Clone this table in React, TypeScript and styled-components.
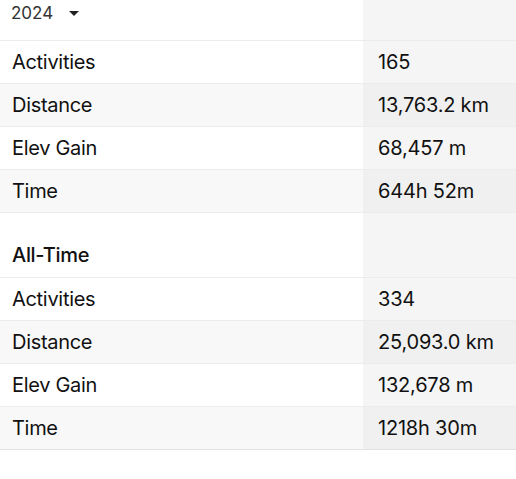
import React from 'react';
import styled, { createGlobalStyle } from 'styled-components';

const GlobalStyle = createGlobalStyle`
  body {
    margin: 0;
    background: #ffffff;
    font-family: Inter, "Liberation Sans", sans-serif;
    color: #111;
  }
`;

const StatsTable = styled.table`
  width: 100%;
  border-collapse: collapse;
  box-shadow: 0 2px 2px rgba(0, 0, 0, 0.06);
  border-bottom: 1px solid #e2e2e2;
`;

const Row = styled.tr<{ $striped?: boolean; $height?: number }>`
  height: ${(p) => p.$height ?? 43}px;
  background: ${(p) => (p.$striped ? '#f8f8f8' : '#ffffff')};
  border-bottom: 1px solid #ececec;
  &:last-child {
    border-bottom: none;
  }
`;

const LabelCell = styled.td`
  width: 363px;
  padding: 0 12px;
  box-sizing: border-box;
  font-size: 20px;
  letter-spacing: -0.3px;
`;

const ValueCell = styled.td<{ $striped?: boolean }>`
  padding: 0 15px;
  font-size: 20px;
  letter-spacing: -0.2px;
  background: ${(p) => (p.$striped ? '#f0f0f0' : '#f5f5f5')};
`;

const YearCell = styled(LabelCell)`
  vertical-align: top;
  padding: 3px 11px 0;
`;

const YearPicker = styled.div`
  display: flex;
  align-items: center;
  gap: 16px;
  font-size: 17px;
  letter-spacing: 0;
  color: #333;
`;

const Caret = styled.span`
  width: 0;
  height: 0;
  border-left: 5px solid transparent;
  border-right: 5px solid transparent;
  border-top: 5px solid #222;
`;

const SectionCell = styled(LabelCell)`
  vertical-align: bottom;
  padding-bottom: 10px;
  font-weight: 500;
`;

type Stat = { label: string; value: string };

const yearStats: Stat[] = [
  { label: 'Activities', value: '165' },
  { label: 'Distance', value: '13,763.2 km' },
  { label: 'Elev Gain', value: '68,457 m' },
  { label: 'Time', value: '644h 52m' },
];

const allTimeStats: Stat[] = [
  { label: 'Activities', value: '334' },
  { label: 'Distance', value: '25,093.0 km' },
  { label: 'Elev Gain', value: '132,678 m' },
  { label: 'Time', value: '1218h 30m' },
];

const StatRows = ({ stats }: { stats: Stat[] }) => (
  <>
    {stats.map((s, i) => (
      <Row key={s.label} $striped={i % 2 === 1}>
        <LabelCell>{s.label}</LabelCell>
        <ValueCell $striped={i % 2 === 1}>{s.value}</ValueCell>
      </Row>
    ))}
  </>
);

export default function App() {
  return (
    <>
      <GlobalStyle />
      <StatsTable>
        <tbody>
          <Row $height={40}>
            <YearCell>
              <YearPicker>
                2024 <Caret />
              </YearPicker>
            </YearCell>
            <ValueCell />
          </Row>
          <StatRows stats={yearStats} />
          <Row $height={65}>
            <SectionCell>All-Time</SectionCell>
            <ValueCell />
          </Row>
          <StatRows stats={allTimeStats} />
        </tbody>
      </StatsTable>
    </>
  );
}
